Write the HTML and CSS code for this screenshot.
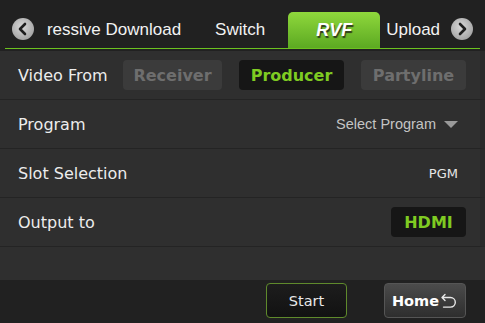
FILE: index.html
```html
<!DOCTYPE html>
<html lang="en">
<head>
  <meta charset="UTF-8" />
  <title>RVF</title>
  <link rel="stylesheet" href="styles.css">
</head>
<body>
  <!-- Tab bar -->
  <header class="header">
    <div class="tabbar">
      <span class="scroll-btn">
        <svg width="22" height="22" viewBox="0 0 22 22"><path d="M13 6 L8 11 L13 16" fill="none" stroke="#1e1e1e" stroke-width="2.6" stroke-linecap="round" stroke-linejoin="round"/></svg>
      </span>
      <div class="tab-view">
        <ul class="tabs">
          <li class="tab tab-first">Progressive Download</li>
          <li class="tab">Switch</li>
          <li class="tab tab-active">RVF</li>
          <li class="tab tab-last">Upload</li>
        </ul>
      </div>
      <span class="scroll-btn">
        <svg width="22" height="22" viewBox="0 0 22 22"><path d="M9 6 L14 11 L9 16" fill="none" stroke="#1e1e1e" stroke-width="2.6" stroke-linecap="round" stroke-linejoin="round"/></svg>
      </span>
    </div>
  </header>

  <!-- Settings -->
  <main class="settings">
    <div class="row">
      <span class="label">Video From</span>
      <div class="choices">
        <button class="chip">Receiver</button>
        <button class="chip chip-on">Producer</button>
        <button class="chip">Partyline</button>
      </div>
    </div>
    <div class="row">
      <span class="label">Program</span>
      <span class="select">Select Program <i class="caret"></i></span>
    </div>
    <div class="row">
      <span class="label">Slot Selection</span>
      <span class="value">PGM</span>
    </div>
    <div class="row">
      <span class="label">Output to</span>
      <button class="chip chip-on chip-small">HDMI</button>
    </div>
  </main>

  <!-- Footer -->
  <footer class="footer">
    <button class="btn-start">Start</button>
    <button class="btn-home">Home
      <svg width="18" height="18" viewBox="0 0 18 18"><path d="M5 2.5 L2 5.5 L5 8.5 M2.5 5.5 H10.5 A4.8 4.8 0 0 1 10.5 15.1 H3.5" fill="none" stroke="#e8e8e8" stroke-width="1.4" stroke-linecap="round" stroke-linejoin="round"/></svg>
    </button>
  </footer>
</body>
</html>
```

FILE: styles.css
```css
* {
  margin: 0;
  padding: 0;
  box-sizing: border-box;
}

body {
  width: 485px;
  height: 323px;
  overflow: hidden;
  background: #2f2f2f;
  font-family: 'DejaVu Sans', Verdana, sans-serif;
  color: #ececec;
  display: flex;
  flex-direction: column;
}

/* Tab bar */
.header {
  background: #212121;
  padding: 0 5px 2px;
}

.tabbar {
  height: 49px;
  display: flex;
  align-items: flex-end;
  padding: 0 7px;
  border-bottom: 1px solid #6cc21f;
}

.scroll-btn {
  flex: none;
  width: 22px;
  height: 22px;
  margin-bottom: 8px;
  border-radius: 50%;
  background: radial-gradient(circle at 45% 40%, #d8d8d8, #a4a4a4 75%, #8a8a8a);
  display: flex;
}

.tab-view {
  flex: 1;
  align-self: stretch;
  overflow: hidden;
  margin-left: 13px;
}

.tabs {
  list-style: none;
  display: flex;
  height: 48px;
  align-items: flex-end;
  margin-left: -53px;
  font-family: 'Liberation Sans', Arial, sans-serif;
  font-size: 17px;
  white-space: nowrap;
}

.tab {
  flex: none;
  height: 36px;
  line-height: 36px;
  padding: 0 17px;
  color: #f2f2f2;
}

.tab-active {
  width: 92px;
  margin-left: 6px;
  padding: 0;
  text-align: center;
  border-radius: 5px 5px 0 0;
  background: linear-gradient(#8fd83c, #5ca922);
  font-size: 18px;
  font-weight: bold;
  font-style: italic;
  color: #fff;
  text-shadow: 1px 2px 1px #2d3a1c;
}

.tab-last {
  padding-left: 6px;
}

/* Settings rows */
.settings {
  flex: none;
  height: 229px;
}

.row {
  height: 49px;
  display: flex;
  align-items: center;
  justify-content: space-between;
  padding: 0 14px 0 18px;
  border-bottom: 1px solid #242424;
  border-right: 5px solid #2a2a2a;
  font-size: 16px;
}

.label {
  color: #ececec;
}

.choices {
  display: flex;
  gap: 17px;
}

.chip {
  width: 105px;
  height: 30px;
  border: none;
  border-radius: 4px;
  background: #3b3b3b;
  color: #6e6e6e;
  font-family: 'DejaVu Sans', Verdana, sans-serif;
  font-size: 16px;
  font-weight: bold;
}

.choices .chip:first-child {
  width: 99px;
}

.chip-on {
  background: #161616;
  color: #7fcb22;
}

.chip-small {
  width: 75px;
}

.select {
  display: flex;
  align-items: center;
  gap: 8px;
  font-family: 'Liberation Sans', Arial, sans-serif;
  font-size: 14.5px;
  color: #c4c4c4;
}

.caret {
  width: 0;
  height: 0;
  border-left: 7px solid transparent;
  border-right: 7px solid transparent;
  border-top: 7px solid #9a9a9a;
  margin-right: 8px;
}

.value {
  font-size: 13px;
  color: #e6e6e6;
  margin-right: 8px;
}

/* Footer */
.footer {
  margin-top: auto;
  height: 43px;
  background: #212121;
  display: flex;
  justify-content: flex-end;
  align-items: flex-start;
  gap: 37px;
  padding: 3px 19px 0 0;
}

.btn-start,
.btn-home {
  height: 35px;
  font-family: 'DejaVu Sans', Verdana, sans-serif;
  font-size: 14.5px;
}

.btn-start {
  width: 81px;
  border: 1px solid #5f8a2c;
  border-radius: 4px;
  background: linear-gradient(#1d1d1d, #121212);
  color: #e8e8e8;
}

.btn-home {
  width: 82px;
  border: 1px solid #555;
  border-radius: 4px;
  background: linear-gradient(#4b4b4b, #2e2e2e);
  color: #fff;
  font-weight: bold;
  display: flex;
  align-items: center;
  justify-content: center;
  gap: 1px;
}
```
